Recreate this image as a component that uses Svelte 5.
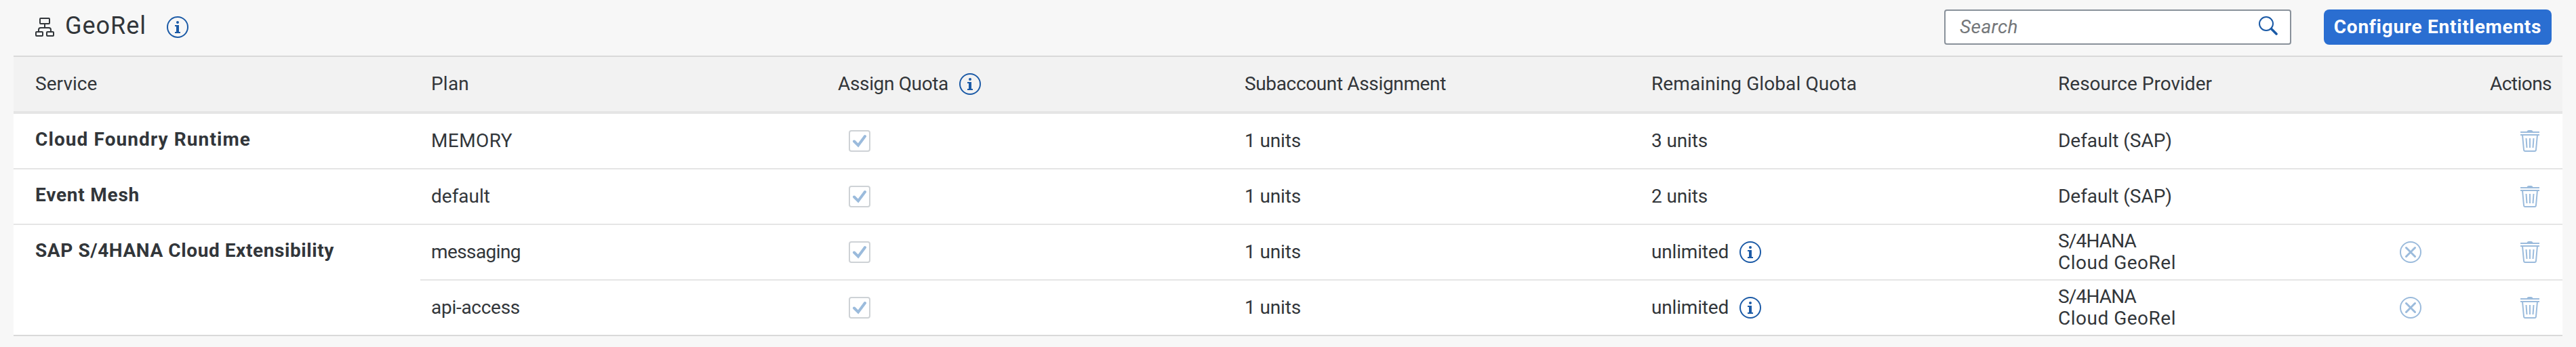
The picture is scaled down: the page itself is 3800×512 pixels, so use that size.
<script>
  const rows = [
    {
      service: 'Cloud Foundry Runtime', width: 318,
      plans: [{ plan: 'MEMORY', width: 120, left: '3 units', provider: [['Default (SAP)', 168]] }]
    },
    {
      service: 'Event Mesh', width: 154,
      plans: [{ plan: 'default', width: 87, left: '2 units', provider: [['Default (SAP)', 168]] }]
    },
    {
      service: 'SAP S/4HANA Cloud Extensibility', width: 441,
      plans: [
        { plan: 'messaging', width: 132, left: 'unlimited', info: true, reset: true, provider: [['S/4HANA', 115], ['Cloud GeoRel', 174]] },
        { plan: 'api-access', width: 131, left: 'unlimited', info: true, reset: true, provider: [['S/4HANA', 115], ['Cloud GeoRel', 174]] }
      ]
    }
  ];

  // Tracks a label out or in so that it takes the given measure.
  function measure(node, width) {
    const natural = node.getBoundingClientRect().width;
    node.style.letterSpacing = `${(width - natural) / node.textContent.length}px`;
  }
</script>

{#snippet label(text, width)}
  <span class="label" use:measure={width}>{text}</span>
{/snippet}

{#snippet infoIcon()}
  <svg class="info" width="32" height="32" viewBox="0 0 32 32">
    <circle cx="16" cy="16" r="15" fill="none" stroke="currentColor" stroke-width="2" />
    <circle cx="16" cy="9" r="2" fill="currentColor" />
    <path d="M12 13h6v10h2v2h-8v-2h2v-8h-2z" fill="currentColor" />
  </svg>
{/snippet}

<main>
  <header>
    <svg class="org" width="28" height="28" viewBox="0 0 28 28" fill="none" stroke="currentColor" stroke-width="2">
      <rect x="7" y="1" width="14" height="8" rx="1" />
      <rect x="1" y="21" width="10" height="6" rx="1" />
      <rect x="17" y="21" width="10" height="6" rx="1" />
      <path d="M14 9v6M5 21v-3q0-3 3-3h12q3 0 3 3v3" />
    </svg>
    <h1>{@render label('GeoRel', 120)}</h1>
    {@render infoIcon()}
    <div class="search">
      <span class="placeholder">{@render label('Search', 86)}</span>
      <svg width="28" height="28" viewBox="0 0 28 28" fill="none" stroke="currentColor">
        <circle cx="11" cy="11" r="10" stroke-width="2" />
        <path d="M18.500 18.500L26 26" stroke-width="3.600" stroke-linecap="round" />
      </svg>
    </div>
    <button>{@render label('Configure Entitlements', 306)}</button>
  </header>

  <section>
    <div class="line head">
      <div class="cell first">{@render label('Service', 91.5)}</div>
      <div class="cell">{@render label('Plan', 56)}</div>
      <div class="cell">{@render label('Assign Quota', 163)}{@render infoIcon()}</div>
      <div class="cell">{@render label('Subaccount Assignment', 297)}</div>
      <div class="cell">{@render label('Remaining Global Quota', 303)}</div>
      <div class="cell">{@render label('Resource Provider', 227)}</div>
      <div class="cell end">{@render label('Actions', 91)}</div>
    </div>
    {#each rows as row}
      <div class="group">
        <div class="service">{@render label(row.service, row.width)}</div>
        <div class="plans">
          {#each row.plans as p}
            <div class="line">
              <div class="cell">{@render label(p.plan, p.width)}</div>
              <div class="cell">
                <span class="check">
                  <svg width="28" height="28" viewBox="0 0 28 28" fill="none" stroke="#9bbbdc" stroke-width="4">
                    <path d="M6 14.500L12 20.500L22 7" stroke-linecap="round" />
                  </svg>
                </span>
              </div>
              <div class="cell">{@render label('1 units', 83)}</div>
              <div class="cell">
                {@render label(p.left, p.info ? 114 : 83)}
                {#if p.info}{@render infoIcon()}{/if}
              </div>
              <div class="cell provider">
                {#each p.provider as [text, width]}
                  {@render label(text, width)}
                {/each}
              </div>
              <div class="cell icons">
                {#if p.reset}
                  <svg width="32" height="32" viewBox="0 0 32 32" fill="none" stroke="currentColor">
                    <circle cx="16" cy="16" r="15" stroke-width="2" />
                    <path d="M9.500 9.500L22.500 22.500M22.500 9.500L9.500 22.500" stroke-width="3" stroke-linecap="round" />
                  </svg>
                {/if}
                <svg width="28" height="32" viewBox="0 0 28 32" fill="none" stroke="currentColor" stroke-width="2">
                  <path d="M0 3h28M0 7h28" />
                  <path d="M9 3q1-3 3-3h4q2 0 3 3z" fill="currentColor" stroke="none" />
                  <path d="M3 7l2 22q.2 2 2 2h14q1.800 0 2-2l2-22" />
                  <path d="M14 12v14M8.500 12l1 14M19.500 12l-1 14" />
                </svg>
              </div>
            </div>
          {/each}
        </div>
      </div>
    {/each}
  </section>
</main>

<style>
  :global(body) { background: #f7f7f7; }
  * { box-sizing: border-box; }
  main {
    width: 3800px; height: 512px; padding: 0 20px;
    background: #f7f7f7; color: #32363a;
    font-family: Roboto, "Noto Sans", sans-serif; font-size: 28px; line-height: 32px;
    white-space: nowrap;
  }
  svg { display: block; flex: none; }
  .label { flex: none; }
  header { height: 82px; padding: 14px 16px 16px 32px; display: flex; align-items: center; }
  h1 { margin: 0 0 0 16px; width: 134px; font-size: 36px; line-height: 44px; font-weight: 400; padding-bottom: 4px; }
  .info { color: #1b5aa6; margin-left: 16px; }
  .search {
    margin-left: auto; width: 512px; height: 52px; padding: 0 18px 0 21px;
    display: flex; align-items: center; justify-content: space-between;
    background: #fff; border: 2px solid #89919a; border-radius: 4px; color: #1b5aa6;
  }
  .placeholder { color: #74777a; font-style: italic; }
  .search svg { margin-bottom: 4px; }
  button {
    margin-left: 48px; width: 336px; height: 52px; padding: 0; border: 0; border-radius: 8px;
    background: #2a6ed1; color: #fff; font: inherit; font-weight: 700;
  }
  section { border-top: 2px solid #d9d9d9; border-bottom: 2px solid #d9d9d9; background: #fff; }
  .line { display: grid; grid-template-columns: 600px 600px 600px 600px 360px 400px; height: 80px; }
  .head {
    grid-template-columns: 600px 600px 600px 600px 600px 400px 360px;
    height: 84px; background: #f2f2f2; border-bottom: 4px solid #e5e5e5;
  }
  .cell { display: flex; align-items: center; padding-left: 16px; }
  .head .first { padding-left: 32px; }
  .end { justify-content: flex-end; padding-right: 16px; }
  .group { display: flex; }
  .group + .group { border-top: 2px solid #e5e5e5; }
  .service { width: 600px; padding: 22px 0 0 32px; font-weight: 700; }
  .plans { flex: 1; }
  .plans .line + .line { height: 82px; border-top: 2px solid #e5e5e5; }
  .check { margin-left: 16px; width: 32px; height: 32px; border: 2px solid #ced2d6; border-radius: 4px; }
  .provider { flex-direction: column; align-items: flex-start; justify-content: center; }
  .icons { justify-content: flex-end; padding-right: 34px; color: #9bbbdc; gap: 146px; }
</style>
